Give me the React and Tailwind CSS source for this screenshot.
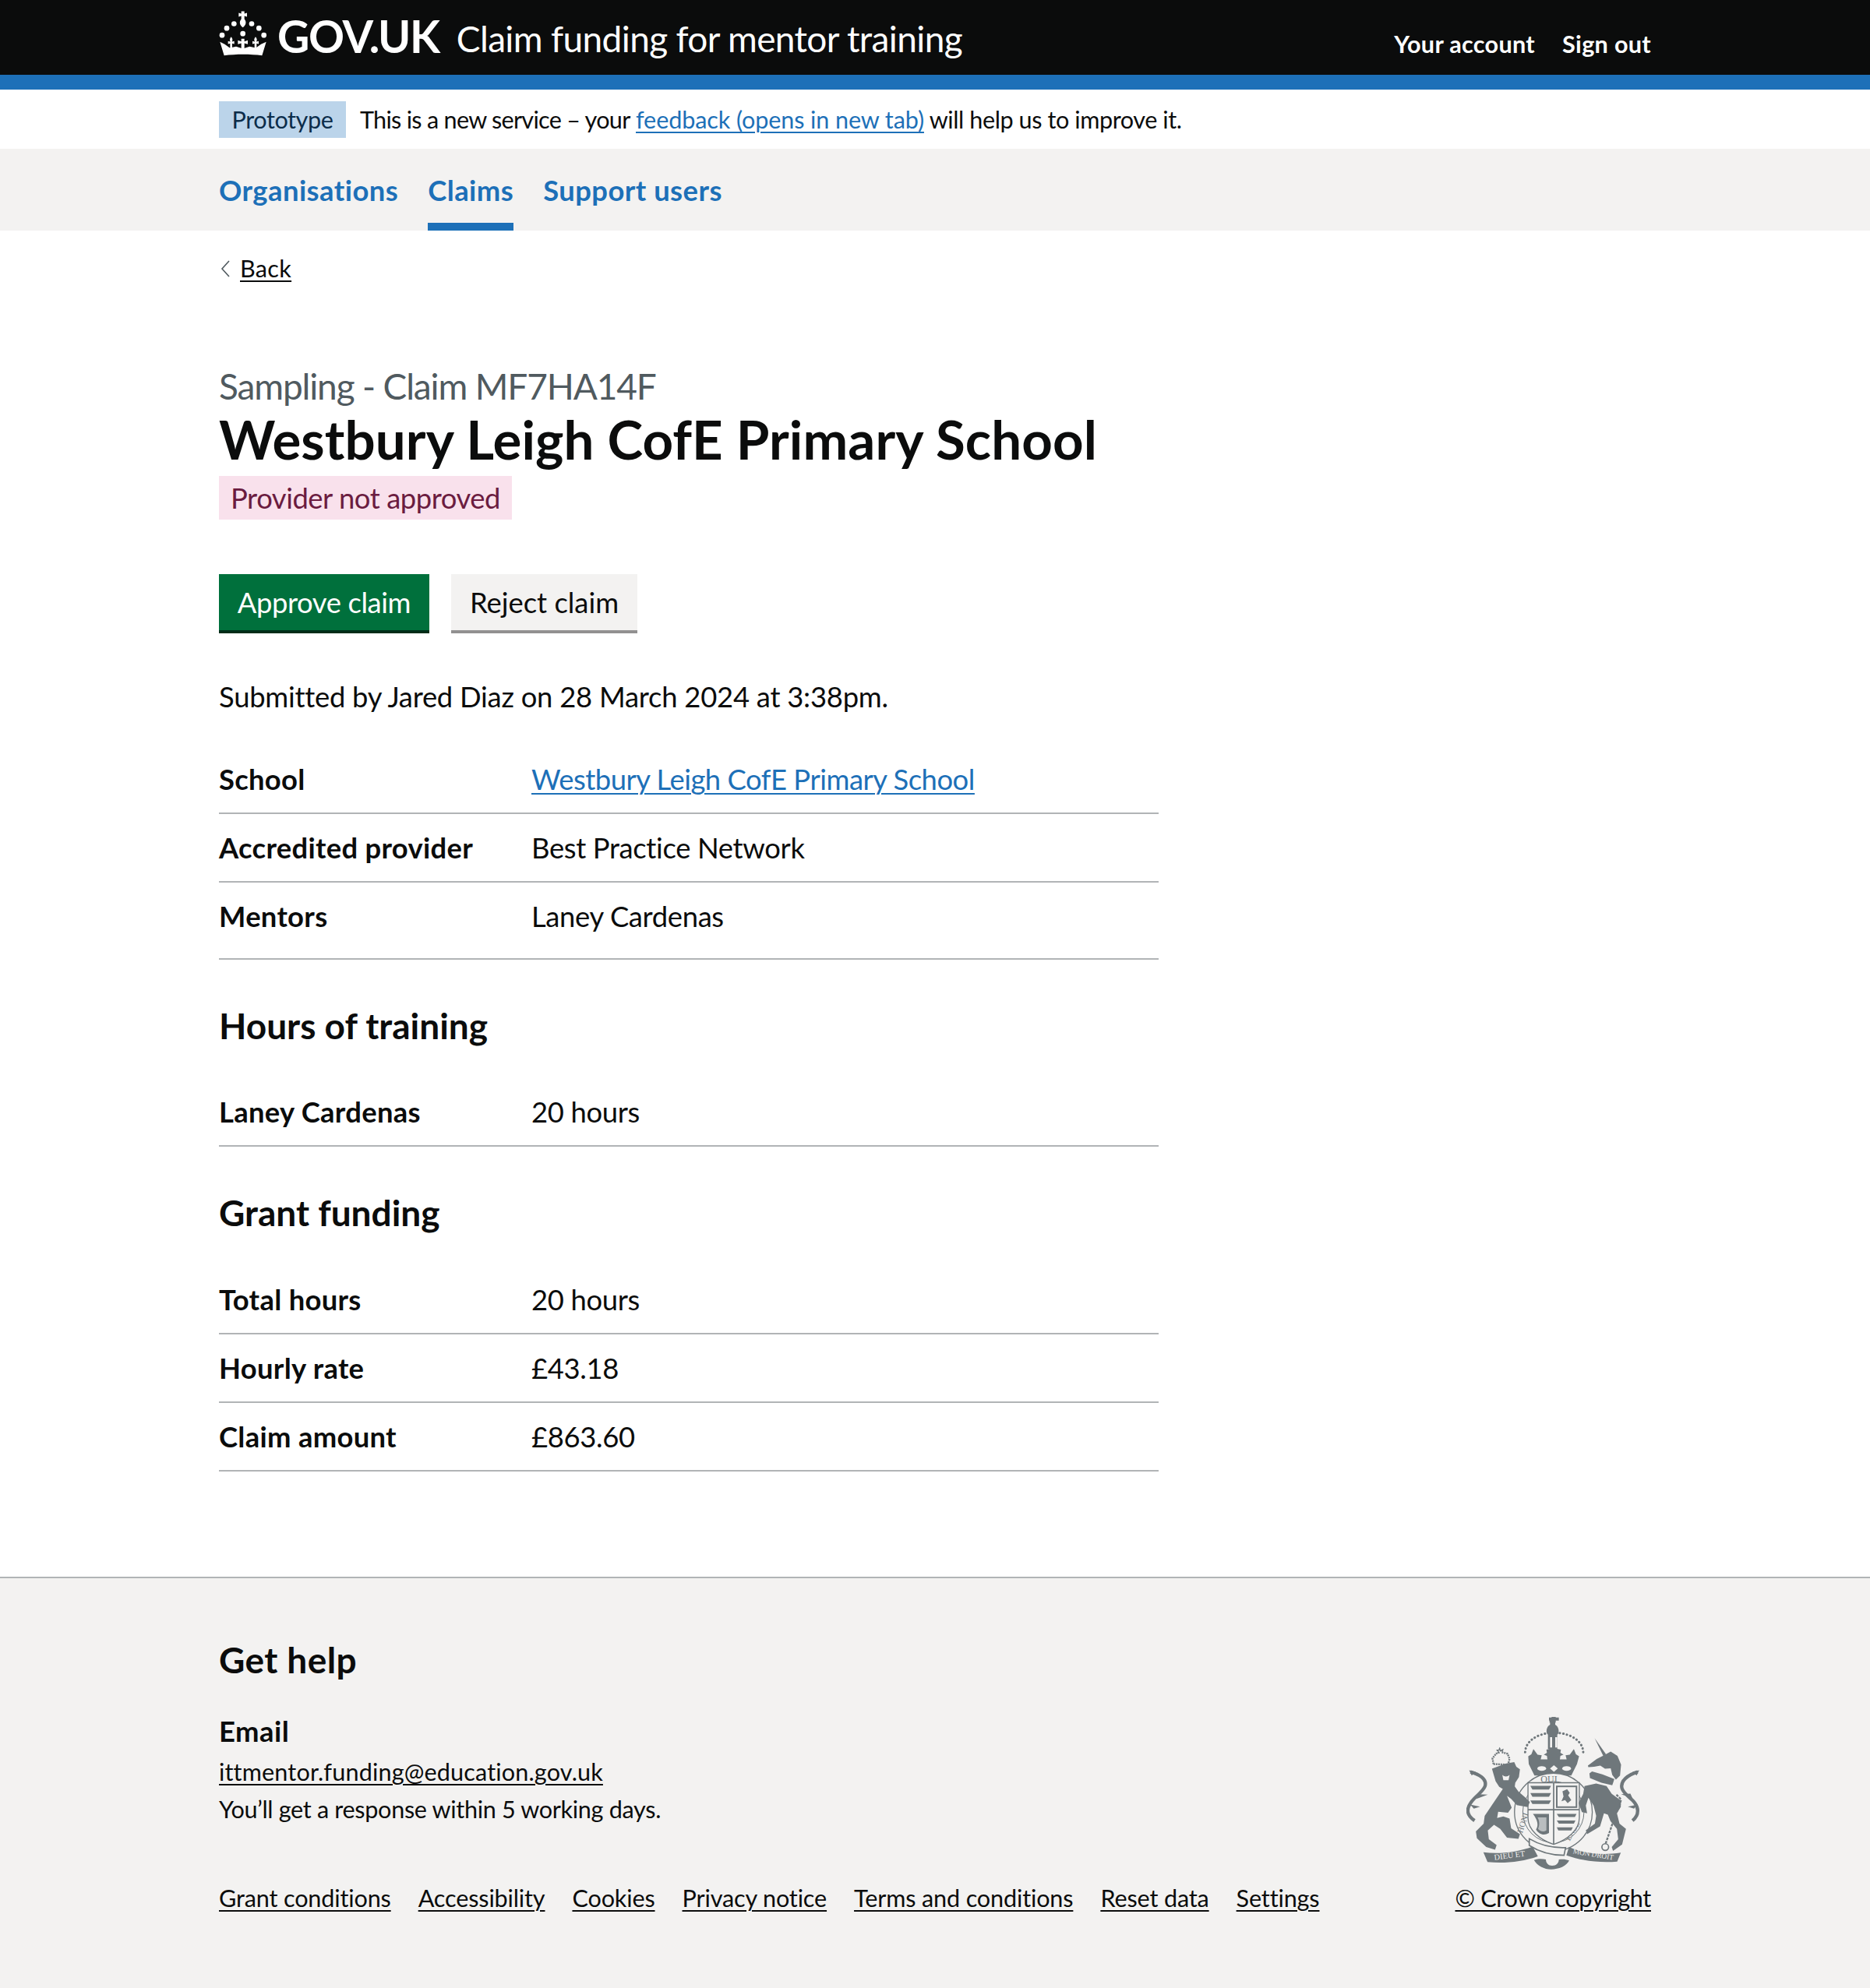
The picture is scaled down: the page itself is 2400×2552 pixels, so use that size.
import React from 'react';

const CrownLogo = () => (
  <svg viewBox="62 38 186 176" className="w-[62px] h-[59px] shrink-0" fill="#fff">
    <path d="M148 42h12v9l10 -3v15l-10 -3v12c8 10 8 22 -6 32c-14 -10 -14 -22 -6 -32v-12l-10 3v-15l10 3z" />
    <circle cx="92" cy="107" r="10" />
    <circle cx="120" cy="90" r="10" />
    <circle cx="188" cy="90" r="10" />
    <circle cx="216" cy="107" r="10" />
    <circle cx="74" cy="134" r="10" />
    <circle cx="235" cy="134" r="10" />
    <circle cx="154" cy="128" r="10" />
    <path d="M66 160l18 9l20 14l24 -5l26 8l26 -8l24 5l20 -14l20 -9l-16 52c-45 -6 -100 -6 -146 0z" />
    <path d="M109 140c5 6 7 11 3 19l9 -2v11l-8 -2v20h-8v-20l-8 2v-11l9 2c-4 -8 -2 -13 3 -19z" />
    <path d="M148 148h12v10l13 -4v15l-13 -4v24h-12v-24l-13 4v-15l13 4z" />
    <path d="M203 140c5 6 7 11 3 19l9 -2v11l-8 -2v20h-8v-20l-8 2v-11l9 2c-4 -8 -2 -13 3 -19z" />
  </svg>
);

const CoatOfArms = () => (
  <svg viewBox="190 95 675 595" className="w-[225px] h-[198px]" fill="#6f777b">
    {/* crown */}
    <path d="M518 112h-10v-12h10v-2h16v2h12v12h-12v8h-2v8c12 6 16 22 12 34l-4 4v56h-36v-56l-4 -4c-4 -12 0 -28 12 -34v-8h-2v-8z" />
    <path d="M512 176h8v40h-8zM532 176h8v40h-8z" fill="#f3f2f1" />
    <path d="M416 234c2 -44 46 -68 92 -74M640 234c-2 -44 -46 -68 -92 -74" fill="none" stroke="#6f777b" strokeWidth="9" strokeLinecap="round" strokeDasharray="1 13" />
    <path d="M428 250l12 -8l8 -20l16 22l16 2l-4 16l26 0l-2 -14l-12 -4l12 -8l-2 -12l28 -6l28 6l-2 12l12 8l-12 4l-2 14l26 0l-4 -16l16 -2l16 -22l8 20l12 8l-8 30l-22 44l-142 0l-22 -44z" />
    <ellipse cx="480" cy="297" rx="17" ry="9" fill="#f3f2f1" />
    <ellipse cx="576" cy="297" rx="17" ry="9" fill="#f3f2f1" />
    <path d="M527 284l15 13l-15 13l-15 -13z" fill="#f3f2f1" />

    {/* garter */}
    <circle cx="525" cy="465" r="150" fill="#f3f2f1" stroke="#6f777b" strokeWidth="4" />
    <circle cx="525" cy="465" r="118" fill="none" stroke="#6f777b" strokeWidth="3" />
    <text x="476" y="350" fontSize="36" fontFamily="Liberation Serif, serif">QUI</text>
    <text x="405" y="548" fontSize="32" fontFamily="Liberation Serif, serif" transform="rotate(-72 405 548)">HONI</text>
    <text x="588" y="578" fontSize="32" fontFamily="Liberation Serif, serif" transform="rotate(-60 588 578)">ENSE</text>

    {/* shield */}
    <path d="M427 352h198v136c0 46 -46 84 -99 102c-53 -18 -99 -56 -99 -102z" fill="#f3f2f1" stroke="#6f777b" strokeWidth="4" />
    <path d="M526 352v238M427 456h198" stroke="#6f777b" strokeWidth="5" />
    <path d="M436 364h80l-8 14h-64zM436 392h80l-8 14h-64zM436 420h80l-8 14h-64z" />
    <path d="M538 472h76l-6 12h-62zM538 498h72l-6 12h-58zM538 524h62l-6 12h-50z" />
    <rect x="538" y="366" width="76" height="80" fill="none" stroke="#6f777b" strokeWidth="6" />
    <path d="M560 385l18 -8l10 14l-6 10l12 18l-14 12l-10 -12l-14 4l8 -18z" />
    <path d="M446 472h62v74c-20 12 -40 4 -50 -14c12 -16 4 -40 -12 -60z" />
    <path d="M464 486h34v50c-14 8 -26 2 -32 -6c6 -14 6 -30 -2 -44z" fill="#b9bdbf" />

    {/* lion */}
    <path d="M294 280l-4 -22l14 -18l10 -4l-4 -8l6 0l2 -6l4 6l6 -2l-2 8l22 6l8 20l-6 22z" fill="none" stroke="#6f777b" strokeWidth="7" strokeDasharray="6 3" />
    <path d="M288 298l52 -20l34 -6l8 18l14 10l-4 30l-14 22l-2 14l14 20l26 22l18 18l-8 20l-42 -8l-22 -24l-16 -12l18 46l-14 20l-38 -4l-4 24l24 -6l24 8l6 38l34 22l-6 18l-44 -4l-26 -34l-24 -16l-24 22l4 34l30 22l-6 18l-34 -10l-36 -34l-4 -26l30 -30l4 -30l40 -60l30 -44l-14 -8l-14 -22z" />
    <path d="M328 322c8 8 20 8 28 0l-4 20h-20z" fill="#f3f2f1" />
    <path d="M205 310c30 8 66 26 56 56c-10 28 -66 54 -66 94c0 20 14 30 26 38" fill="none" stroke="#6f777b" strokeWidth="13" />
    <path d="M200 304l26 6l-16 14zM272 398l-44 16l8 -18zM204 436l38 8l-24 8z" />

    {/* unicorn */}
    <path d="M684 180l44 62l-10 8z" />
    <path d="M658 286l34 -26l28 -14l26 -14l26 16l14 34l-4 42l-16 16l-14 -18l-6 -26l-22 2l-18 -12l-24 4l-22 2z" />
    <path d="M664 316l10 -8l40 12l46 18l-8 24l-42 -10l-44 -18z" />
    <path d="M645 365l45 -10l40 10l20 30l35 25v25l-15 25l10 40l25 20l-15 60l-35 25l-5 -15l25 -30l-5 -40l-25 -30l-10 -25l-15 -5l-15 50l-50 30l-5 -15l35 -25l5 -30l-10 -40l-20 -30l-10 30l5 30l-20 -5l-13 -35l18 -35z" />
    <path d="M768 398l18 18l-6 26l-14 28l-20 60l-20 58" fill="none" stroke="#6f777b" strokeWidth="7" strokeDasharray="10 4" />
    <circle cx="725" cy="600" r="13" fill="none" stroke="#6f777b" strokeWidth="5" />
    <path d="M850 310c-35 10 -70 35 -60 65c10 30 60 45 60 85c0 20 -10 30 -20 38" fill="none" stroke="#6f777b" strokeWidth="13" />
    <path d="M856 304l-26 6l16 14zM786 396l44 16l-8 -18zM850 436l-38 8l24 8z" />

    {/* motto */}
    <path d="M255 620c60 8 130 0 190 -22l20 38c-60 22 -130 28 -194 22z" />
    <path d="M585 600c60 26 130 32 200 22l-14 34c-70 6 -140 -4 -196 -24z" />
    <text x="298" y="650" fontSize="31" fill="#f3f2f1" fontFamily="Liberation Serif, serif" transform="rotate(-7 298 650)">DIEU ET</text>
    <text x="600" y="625" fontSize="28" fill="#f3f2f1" fontFamily="Liberation Serif, serif" transform="rotate(9 600 625)">MON DROIT</text>
    <path d="M432 568c40 24 90 36 140 34l-6 30c-50 0 -100 -16 -134 -38z" fill="#f3f2f1" stroke="#6f777b" strokeWidth="5" />
    <path d="M450 650c20 -6 34 -4 46 -2c0 14 10 24 24 24c16 0 26 -10 26 -24c14 -2 26 -2 40 4c-10 22 -40 34 -70 34c-26 0 -54 -14 -66 -36z" />
  </svg>
);

const SummaryRow = ({ label, children }) => (
  <div className="flex border-b-2 border-[#b1b4b6] py-[19px]">
    <dt className="w-[401px] shrink-0 font-bold leading-[48px] tracking-[0.3px]">{label}</dt>
    <dd className="leading-[48px] tracking-[-0.35px]">{children}</dd>
  </div>
);

const footerLinks = ['Grant conditions', 'Accessibility', 'Cookies', 'Privacy notice', 'Terms and conditions', 'Reset data', 'Settings'];

export default function App() {
  return (
    <div className="min-h-[2552px] bg-white font-['Lato',sans-serif] text-[#0b0c0c] text-[36.4px]">
      <header className="bg-[#0b0c0c] border-b-[19px] border-[#1d70b8] h-[115px]">
        <div className="w-[1838px] mx-auto flex justify-between h-[96px]">
          <div className="flex items-start pt-[13px]">
            <CrownLogo />
            <span className="ml-[13px] text-white font-bold text-[57px] leading-[68px] tracking-[-1.3px] -mt-[13px] pt-[12px] h-[80px]">GOV.UK</span>
            <span className="ml-[22px] text-white text-[46px] leading-[52px] tracking-[-0.64px] mt-[11px]">Claim funding for mentor training</span>
          </div>
          <div className="flex gap-[35px] text-white font-bold text-[30.6px] tracking-[0.3px] pt-[38px] leading-[38px]">
            <span>Your account</span>
            <span>Sign out</span>
          </div>
        </div>
      </header>

      <div className="h-[76px]">
        <div className="w-[1838px] mx-auto flex items-start pt-[15px] text-[30.6px] tracking-[-0.42px]">
          <span className="bg-[#bbd4ea] text-[#0c2d4a] h-[47px] w-[163px] text-center leading-[47px]">Prototype</span>
          <span className="ml-[18px] leading-[47px]">
            <span className="tracking-[-0.72px]">This is a new service – your</span>{' '}
            <a href="#" className="text-[#1d70b8] underline decoration-2 underline-offset-4 tracking-[-0.12px]">feedback (opens in new tab)</a>{' '}
            will help us to improve it.
          </span>
        </div>
      </div>

      <nav className="bg-[#f3f2f1] h-[105px]">
        <ul className="w-[1838px] mx-auto flex gap-[38px] font-bold text-[#1d70b8] tracking-[0.45px] h-full">
          <li className="pt-[30px] leading-[46px]">Organisations</li>
          <li className="pt-[30px] leading-[46px] border-b-[10px] border-[#1d70b8]">Claims</li>
          <li className="pt-[30px] leading-[46px]">Support users</li>
        </ul>
      </nav>

      <main className="w-[1838px] mx-auto">
        <a href="#" className="flex items-center mt-[30px] text-[30.6px] leading-[38px] h-[38px] tracking-[0.3px]">
          <svg viewBox="0 0 12 24" className="w-[12px] h-[24px] mr-[13px] ml-[2px]" fill="none" stroke="#505a5f" strokeWidth="1.6">
            <path d="M11 2L2 12l9 10" />
          </svg>
          <span className="underline decoration-2 underline-offset-4">Back</span>
        </a>

        <p className="mt-[103px] text-[#505a5f] text-[46px] leading-[58px] tracking-[-1.15px]">Sampling - Claim MF7HA14F</p>
        <h1 className="font-bold text-[69px] leading-[78px] tracking-[0.1px]">Westbury Leigh CofE Primary School</h1>
        <span className="inline-block mt-[8px] bg-[#f9e1ec] text-[#6b1c40] h-[56px] w-[376px] text-center leading-[56px] tracking-[-0.45px]">Provider not approved</span>

        <div className="flex gap-[28px] mt-[70px]">
          <button className="bg-[#00703c] text-white h-[76px] w-[270px] border-b-[4px] border-[#002d18] tracking-[-0.4px]">Approve claim</button>
          <button className="bg-[#f3f2f1] h-[76px] w-[239px] border-b-[4px] border-[#929191]">Reject claim</button>
        </div>

        <p className="mt-[57px] leading-[48px] tracking-[-0.25px]">Submitted by Jared Diaz on 28 March 2024 at 3:38pm.</p>

        <div className="w-[1206px]">
          <dl className="mt-[39px]">
            <SummaryRow label="School">
              <a href="#" className="text-[#1d70b8] underline decoration-2 underline-offset-4 tracking-[-0.47px]">Westbury Leigh CofE Primary School</a>
            </SummaryRow>
            <SummaryRow label="Accredited provider">Best Practice Network</SummaryRow>
            <div className="flex border-b-2 border-[#b1b4b6] pt-[19px] pb-[30px]">
              <dt className="w-[401px] shrink-0 font-bold leading-[48px] tracking-[0.3px]">Mentors</dt>
              <dd className="leading-[48px] tracking-[-0.35px]">Laney Cardenas</dd>
            </div>
          </dl>

          <h2 className="font-bold text-[46px] leading-[56px] mt-[57px]">Hours of training</h2>
          <dl className="mt-[39px]">
            <SummaryRow label="Laney Cardenas">20 hours</SummaryRow>
          </dl>

          <h2 className="font-bold text-[46px] leading-[56px] mt-[57px]">Grant funding</h2>
          <dl className="mt-[40px]">
            <SummaryRow label="Total hours">20 hours</SummaryRow>
            <SummaryRow label="Hourly rate">£43.18</SummaryRow>
            <SummaryRow label="Claim amount">£863.60</SummaryRow>
          </dl>
        </div>
      </main>

      <footer className="mt-[135px] bg-[#f3f2f1] border-t-2 border-[#b1b4b6] h-[528px]">
        <div className="w-[1838px] mx-auto flex justify-between items-end h-[435px]">
          <div>
            <h2 className="font-bold text-[46px] leading-[56px] tracking-[0.4px]">Get help</h2>
            <h3 className="font-bold leading-[48px] mt-[39px] tracking-[0.5px]">Email</h3>
            <p className="mt-[5px] text-[30.6px] leading-[48px] tracking-[0.15px]">
              <a href="#" className="underline decoration-2 underline-offset-4">ittmentor.funding@education.gov.uk</a>
            </p>
            <p className="text-[30.6px] leading-[48px] tracking-[-0.32px]">You’ll get a response within 5 working days.</p>
            <ul className="flex gap-[35px] mt-[66px] text-[30.6px] leading-[48px] tracking-[-0.15px]">
              {footerLinks.map(link => (
                <li key={link}><a href="#" className="underline decoration-2 underline-offset-4">{link}</a></li>
              ))}
            </ul>
          </div>
          <div className="flex flex-col items-end">
            <div className="mr-[12px]"><CoatOfArms /></div>
            <a href="#" className="mt-[12px] text-[30.6px] leading-[48px] tracking-[-0.3px] underline decoration-2 underline-offset-4">© Crown copyright</a>
          </div>
        </div>
      </footer>
    </div>
  );
}
